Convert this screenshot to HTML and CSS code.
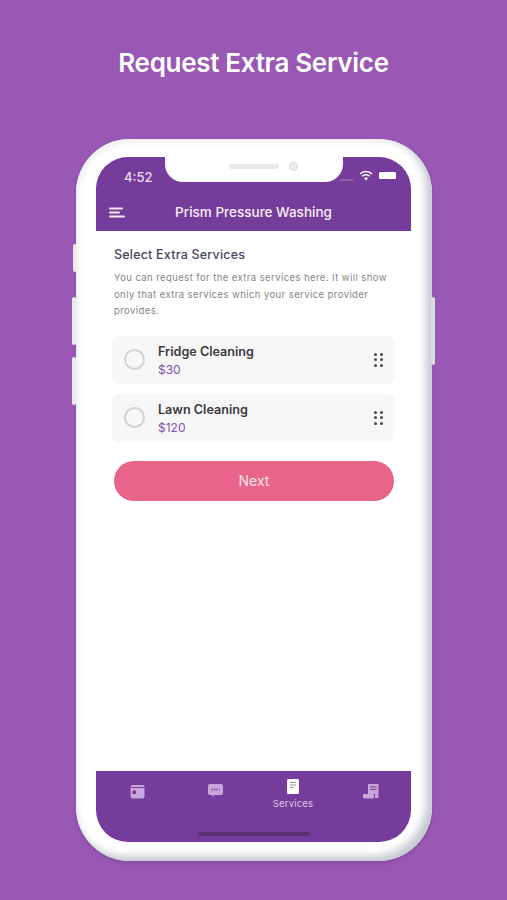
FILE: index.html
```html
<!DOCTYPE html>
<html>
    <head lang="en">
        <meta charset="UTF-8">
        <title>Request Extra Service</title>
        <link rel="stylesheet" href="styles.css">
    </head>
    <body>
    <h1 class="title">Request Extra Service</h1>
    <div class="phone">
        <span class="side-btn btn-1"></span>
        <span class="side-btn btn-2"></span>
        <span class="side-btn btn-3"></span>
        <span class="side-btn btn-4"></span>
        <div class="screen">
            <div class="notch">
                <span class="speaker"></span>
                <span class="camera"></span>
            </div>
            <div class="header">
                <div class="status">
                    <span class="time">4:52</span>
                    <div class="status-icons">
                        <span class="signal"></span>
                        <svg width="14" height="11" viewBox="0 0 14 11">
                            <path d="M1 4 A8.5 8.5 0 0 1 13 4" fill="none" stroke="#fff" stroke-width="1.5"/>
                            <path d="M3.2 6.2 A5.4 5.4 0 0 1 10.8 6.2" fill="none" stroke="#fff" stroke-width="1.5"/>
                            <path d="M7 10.5 L4.9 8.2 A3 3 0 0 1 9.1 8.2 Z" fill="#fff"/>
                        </svg>
                        <span class="battery"></span>
                    </div>
                </div>
                <div class="navbar">
                    <svg class="menu" width="16" height="11" viewBox="0 0 16 11">
                        <path d="M1 1.5 H13 M1 5.5 H10 M1 9.5 H15" stroke="#f1e8f5" stroke-width="2" stroke-linecap="round"/>
                    </svg>
                    <span class="nav-title">Prism Pressure Washing</span>
                </div>
            </div>
            <div class="content">
                <h2 class="heading">Select Extra Services</h2>
                <p class="desc">You can request for the extra services here. It will show only that extra services which your service provider provides.</p>
                <div class="service">
                    <span class="radio"></span>
                    <div class="service-info">
                        <div class="service-name">Fridge Cleaning</div>
                        <div class="service-price">$30</div>
                    </div>
                    <div class="dots"><i></i><i></i><i></i><i></i><i></i><i></i></div>
                </div>
                <div class="service">
                    <span class="radio"></span>
                    <div class="service-info">
                        <div class="service-name">Lawn Cleaning</div>
                        <div class="service-price">$120</div>
                    </div>
                    <div class="dots"><i></i><i></i><i></i><i></i><i></i><i></i></div>
                </div>
                <div class="next">Next</div>
            </div>
            <div class="tabs">
                <div class="tab">
                    <svg width="15" height="15" viewBox="0 0 15 15">
                        <path d="M2.5 1 H12.5 A2 2 0 0 1 14.5 3 V12.5 A2 2 0 0 1 12.5 14.5 H2.5 A2 2 0 0 1 .5 12.5 V3 A2 2 0 0 1 2.5 1 Z" fill="#c9a6d9"/>
                        <rect x=".5" y="3" width="14" height="1" fill="#763c9b"/>
                        <rect x="2.5" y="6.5" width="3.5" height="3.5" fill="#763c9b"/>
                    </svg>
                </div>
                <div class="tab">
                    <svg width="15" height="14" viewBox="0 0 15 14">
                        <path d="M2 0 H13 A2 2 0 0 1 15 2 V9 A2 2 0 0 1 13 11 H6.5 L4.5 13.5 V11 H2 A2 2 0 0 1 0 9 V2 A2 2 0 0 1 2 0 Z" fill="#c9a6d9"/>
                        <path d="M3.5 5.5 H11.5" stroke="#763c9b" stroke-width="1.5" stroke-dasharray="1.5 1"/>
                    </svg>
                </div>
                <div class="tab active">
                    <svg width="12" height="15" viewBox="0 0 12 15">
                        <rect width="12" height="15" rx="1.5" fill="#fff"/>
                        <path d="M3 3.5 H9 M3 6 H9 M3 8.5 H6" stroke="#a67dbd" stroke-width="1"/>
                    </svg>
                    <span class="tab-label">Services</span>
                </div>
                <div class="tab">
                    <svg width="16" height="15" viewBox="0 0 16 15">
                        <path d="M5 0 H15.5 V14 H12 V10 H5 Z" fill="#c9a6d9"/>
                        <path d="M7 3 H13.5 M7 5.5 H13.5" stroke="#763c9b" stroke-width="1"/>
                        <rect y="10" width="11" height="4.5" rx="1" fill="#c9a6d9"/>
                    </svg>
                </div>
            </div>
            <span class="home-bar"></span>
        </div>
    </div>
    </body>
</html>
```

FILE: styles.css
```css
*{
    margin:0;
    padding:0;
    box-sizing:border-box;
}
body{
    width:507px;
    height:900px;
    overflow:hidden;
    background:#9a58b5;
    font-family:Inter,"Liberation Sans",sans-serif;
}
.title{
    height:139px;
    padding-top:45px;
    text-align:center;
    font-size:26px;
    line-height:36px;
    font-weight:600;
    letter-spacing:-.3px;
    color:#fff;
}
.phone{
    position:relative;
    width:356px;
    height:722px;
    margin-left:76px;
    padding:18px 21px 19px 20px;
    background:#fff;
    border-radius:54px;
    box-shadow:inset -6px -5px 9px #c3c8ce, inset 3px 3px 6px #eef0f1, 0 2px 4px rgba(70,40,90,.25);
}
.side-btn{
    position:absolute;
    width:4px;
    background:#e9ebed;
    border-radius:2px;
}
.btn-1{left:-3px;top:105px;height:28px;}
.btn-2{left:-4px;top:158px;height:48px;}
.btn-3{left:-4px;top:218px;height:48px;}
.btn-4{right:-3px;top:158px;height:68px;background:#d9dce0;}
.screen{
    position:relative;
    display:flex;
    flex-direction:column;
    height:100%;
    background:#fff;
    border-radius:32px;
    overflow:hidden;
}
.notch{
    position:absolute;
    top:0;
    left:69px;
    width:178px;
    height:25px;
    display:flex;
    justify-content:center;
    align-items:center;
    gap:10px;
    padding:0 0 7px 18px;
    background:#fff;
    border-radius:0 0 18px 18px;
}
.speaker{
    width:50px;
    height:5px;
    background:#e6e8ea;
    border-radius:3px;
}
.camera{
    width:9px;
    height:9px;
    background:#eceef0;
    border:1px solid #d6d9dc;
    border-radius:50%;
}
.header{
    height:74px;
    background:#763c9b;
    color:#fff;
}
.status{
    display:flex;
    justify-content:space-between;
    align-items:center;
    height:39px;
    padding:0 15px 0 28px;
}
.time{
    font-size:13px;
    font-weight:500;
    padding-top:1px;
    color:#eadff0;
}
.status-icons{
    display:flex;
    align-items:center;
    gap:6px;
    padding-bottom:2px;
}
.signal{
    width:13px;
    height:2px;
    margin-top:8px;
    background:#8d5eab;
}
.battery{
    width:17px;
    height:7px;
    background:#fff;
    border-radius:1.5px;
}
.navbar{
    position:relative;
    height:35px;
    text-align:center;
}
.menu{
    position:absolute;
    left:13px;
    top:11px;
}
.nav-title{
    font-size:13.5px;
    line-height:33px;
    font-weight:500;
    color:#f6f0f9;
}
.content{
    flex:1;
    padding:15px 17px 0 16px;
}
.heading{
    padding-left:2px;
    font-size:12.5px;
    line-height:17px;
    font-weight:500;
    letter-spacing:.2px;
    color:#4a4560;
}
.desc{
    margin-top:7px;
    margin-bottom:16px;
    padding-left:2px;
    font-size:9.5px;
    line-height:16.5px;
    letter-spacing:.42px;
    color:#85858a;
}
.service{
    display:flex;
    align-items:center;
    height:48px;
    margin-bottom:10px;
    padding:0 12px;
    background:#f7f7f8;
    border-radius:6px;
}
.radio{
    width:21px;
    height:21px;
    margin-right:13px;
    background:#f7f7f8;
    border:2px solid #d2d2d2;
    border-radius:50%;
}
.service-info{
    flex:1;
}
.service-name{
    font-size:12.6px;
    line-height:17px;
    font-weight:600;
    color:#3a3a3e;
}
.service-price{
    margin-top:2px;
    font-size:12px;
    line-height:15px;
    color:#8050ac;
}
.dots{
    display:grid;
    grid-template-columns:3px 3px;
    gap:2.5px 3px;
    margin-right:-1px;
}
.dots i{
    width:3px;
    height:3px;
    background:#4a4a4e;
    border-radius:50%;
}
.next{
    width:280px;
    height:40px;
    margin:19px 0 0 2px;
    background:#e86488;
    border-radius:20px;
    text-align:center;
    font-size:14px;
    line-height:40px;
    color:#fbe4ea;
}
.tabs{
    display:flex;
    height:71px;
    padding:6px 1px 0 2px;
    background:#763c9b;
}
.tab{
    flex:1;
    display:flex;
    flex-direction:column;
    align-items:center;
    padding-top:7px;
}
.tab.active{
    padding-top:2px;
}
.tab-label{
    margin-top:4px;
    font-size:9.5px;
    line-height:12px;
    letter-spacing:.2px;
    color:#dcc6e8;
}
.home-bar{
    position:absolute;
    left:102px;
    bottom:6px;
    width:112px;
    height:4px;
    background:#583076;
    border-radius:2px;
}
```
